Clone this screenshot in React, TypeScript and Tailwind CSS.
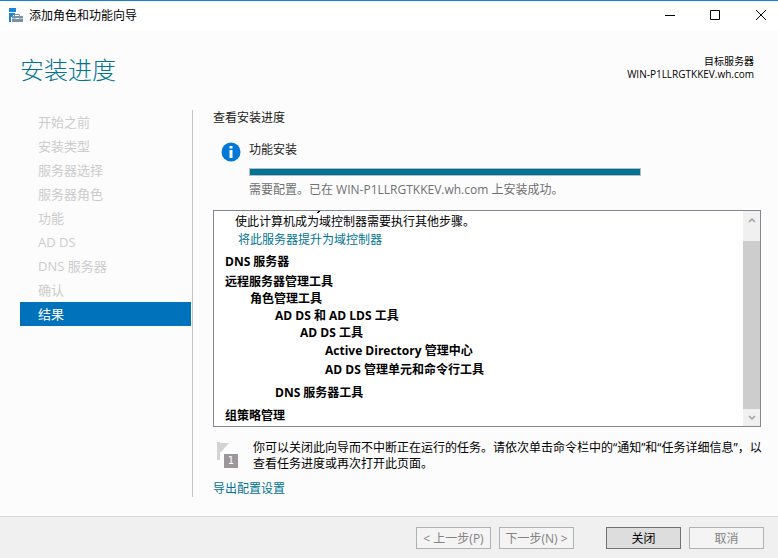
import React from 'react';

const steps = [
  '开始之前',
  '安装类型',
  '服务器选择',
  '服务器角色',
  '功能',
  'AD DS',
  'DNS 服务器',
  '确认',
  '结果',
];

const features = [
  { label: 'DNS 服务器', className: 'mt-1.5 pl-[11px]' },
  { label: '远程服务器管理工具', className: 'mt-1 pl-[11px]' },
  { label: '角色管理工具', className: 'mt-px pl-9' },
  { label: 'AD DS 和 AD LDS 工具', className: 'mt-px pl-[61px]' },
  { label: 'AD DS 工具', className: 'mt-px pl-[86px]' },
  { label: 'Active Directory 管理中心', className: 'mt-0.5 pl-[111px]' },
  { label: 'AD DS 管理单元和命令行工具', className: 'mt-[3px] pl-[111px]' },
  { label: 'DNS 服务器工具', className: 'mt-[7px] pl-[61px]' },
  { label: '组策略管理', className: 'mt-[7px] pl-[11px]' },
];

const WizardIcon = () => (
  <svg className="w-4 h-4" viewBox="0 0 16 16" aria-hidden="true">
    <path d="M1 0h7v4H1zM1 5h6v2H5v2H3v5H1z" fill="#1b86d8" />
    <path d="M6.500 9V6.500h5V9" fill="none" stroke="#7b93a8" />
    <path d="M4 8h11v6H4z" fill="#7b93a8" />
    <path d="M4 10.500h4M11 10.500h4" stroke="#b4c3cf" />
    <path d="M8 10h3v1H8z" fill="#fff" />
  </svg>
);

const InfoIcon = () => (
  <svg className="w-5 h-5" viewBox="0 0 20 20" aria-hidden="true">
    <circle cx="10" cy="10" r="9.500" fill="#0078d7" />
    <path d="M8.500 4h3v2.500h-3zM8.500 8h3v8h-3z" fill="#fff" />
  </svg>
);

const FlagIcon = () => (
  <div className="relative w-[22px] h-[26px] shrink-0">
    <svg className="w-full h-full" viewBox="0 0 22 26" aria-hidden="true">
      <path d="M0 0h3v18H0z" fill="#d3d3d3" />
      <path d="M3 1h9L4 10H3z" fill="#d3d3d3" />
      <path d="M7 12h14v14H7z" fill="#9b979b" />
    </svg>
    <span className="absolute right-px bottom-0 w-3.5 text-center text-[10px] leading-3.5 text-white font-['DejaVu_Sans',sans-serif]">
      1
    </span>
  </div>
);

const WindowControls = () => (
  <div className="flex items-center gap-[33px] pr-3">
    <button type="button" aria-label="最小化">
      <svg className="w-3 h-3" viewBox="0 0 12 12" stroke="#000">
        <path d="M1 5.500h10" />
      </svg>
    </button>
    <button type="button" aria-label="最大化">
      <svg className="w-3 h-3" viewBox="0 0 12 12" fill="none" stroke="#000">
        <path d="M1.500 .5h9v9h-9z" />
      </svg>
    </button>
    <button type="button" aria-label="关闭窗口">
      <svg className="w-3 h-3" viewBox="0 0 12 12" stroke="#000">
        <path d="M2 0l10 10M12 0L2 10" />
      </svg>
    </button>
  </div>
);

const Scrollbar = () => (
  <div className="w-[17px] shrink-0 flex flex-col bg-[#f0f0f0]">
    <button type="button" aria-label="向上滚动" className="h-[17px] flex items-center justify-center">
      <svg className="w-2 h-2" viewBox="0 0 8 8" fill="none" stroke="#a0a0a0" strokeWidth="1.500">
        <path d="M1 6l3-3 3 3" />
      </svg>
    </button>
    <div className="mt-[13px] flex-1 bg-[#cdcdcd]" />
    <button type="button" aria-label="向下滚动" className="h-[17px] flex items-center justify-center">
      <svg className="w-2 h-2" viewBox="0 0 8 8" fill="none" stroke="#a0a0a0" strokeWidth="1.500">
        <path d="M1 2l3 3 3-3" />
      </svg>
    </button>
  </div>
);

export default function App() {
  return (
    <div className="min-h-screen flex flex-col bg-[#fcfcfc] border-t border-[#1a80d4] text-xs leading-4 text-black font-['Open_Sans','Noto_Sans_CJK_SC',sans-serif]">
      <div className="h-[30px] flex items-center justify-between bg-white pl-2">
        <div className="flex items-center gap-[5px]">
          <WizardIcon />
          <span>添加角色和功能向导</span>
        </div>
        <WindowControls />
      </div>

      <header className="flex items-start justify-between pt-[23px] pb-6 pl-5 pr-6">
        <h1 className="text-2xl leading-8 font-light text-[#007394]">安装进度</h1>
        <div className="pt-px text-right text-[10px] leading-[13px]">
          <div>目标服务器</div>
          <div>WIN-P1LLRGTKKEV.wh.com</div>
        </div>
      </header>

      <div className="flex-1 flex pb-[19px] pr-3.5">
        <nav className="w-[193px] shrink-0 border-r border-[#c3c3c3] pl-5 pr-px">
          <ol>
            {steps.map((step) => (
              <li
                key={step}
                aria-current={step === '结果' ? 'step' : undefined}
                className="h-6 pl-[18px] text-[13px] leading-6 text-[#cccccc] aria-[current=step]:bg-[#0072bc] aria-[current=step]:text-white"
              >
                {step}
              </li>
            ))}
          </ol>
        </nav>

        <main className="flex-1 min-w-0 pl-5">
          <h2 className="text-[#222222]">查看安装进度</h2>

          <div className="mt-4 flex items-start gap-2 pl-2">
            <InfoIcon />
            <div className="flex-1">
              <div className="text-[#222222]">功能安装</div>
              <div
                role="progressbar"
                aria-label="功能安装"
                aria-valuenow={100}
                className="mt-2.5 w-[392px] max-w-full h-2 border border-[#bcbcbc] bg-[#007394]"
              />
              <p className="mt-1.5 text-[#707070]">需要配置。已在 WIN-P1LLRGTKKEV.wh.com 上安装成功。</p>
            </div>
          </div>

          <div className="relative mt-3 mr-[3px] flex border border-[#828790] bg-white">
            {/* tail of the line scrolled out above */}
            <svg className="absolute left-[102px] top-0 w-1 h-[3px]" viewBox="0 0 4 3" aria-hidden="true">
              <path d="M2 0h2v1H3v1H1V1h1z" fill="#000" />
            </svg>
            <div className="flex-1 min-w-0 pt-[3px] pb-0.5">
              <p className="pl-[21px]">使此计算机成为域控制器需要执行其他步骤。</p>
              <a href="#promote" className="mt-0.5 ml-6 block w-fit text-[#007394]">
                将此服务器提升为域控制器
              </a>
              <ul className="font-bold">
                {features.map((feature) => (
                  <li key={feature.label} className={feature.className}>
                    {feature.label}
                  </li>
                ))}
              </ul>
            </div>
            <Scrollbar />
          </div>

          <div className="mt-[13px] flex items-start gap-3.5 pl-1">
            <div className="pt-0.5">
              <FlagIcon />
            </div>
            <p>
              你可以关闭此向导而不中断正在运行的任务。请依次单击命令栏中的“通知”和“任务详细信息”，以
              <br />
              查看任务进度或再次打开此页面。
            </p>
          </div>

          <a href="#export" className="mt-[9px] block w-fit text-[#007394]">
            导出配置设置
          </a>
        </main>
      </div>

      <footer className="flex justify-end gap-2 border-t border-[#dadada] bg-[#f0f0f0] pt-2.5 pb-[9px] pr-3.5">
        <button type="button" disabled className="w-[75px] h-[22px] border border-[#adb2b5] bg-[#f4f4f4] pt-0.5 leading-4 whitespace-nowrap text-[#838383]">
          &lt; 上一步(P)
        </button>
        <button type="button" disabled className="w-[75px] h-[22px] border border-[#adb2b5] bg-[#f4f4f4] pt-0.5 leading-4 whitespace-nowrap text-[#838383]">
          下一步(N) &gt;
        </button>
        <button type="button" className="ml-6 w-[75px] h-[22px] border border-[#707070] bg-[#dddddd] pt-0.5 leading-4">
          关闭
        </button>
        <button type="button" disabled className="w-[75px] h-[22px] border border-[#adb2b5] bg-[#f4f4f4] pt-0.5 leading-4 text-[#838383]">
          取消
        </button>
      </footer>
    </div>
  );
}
